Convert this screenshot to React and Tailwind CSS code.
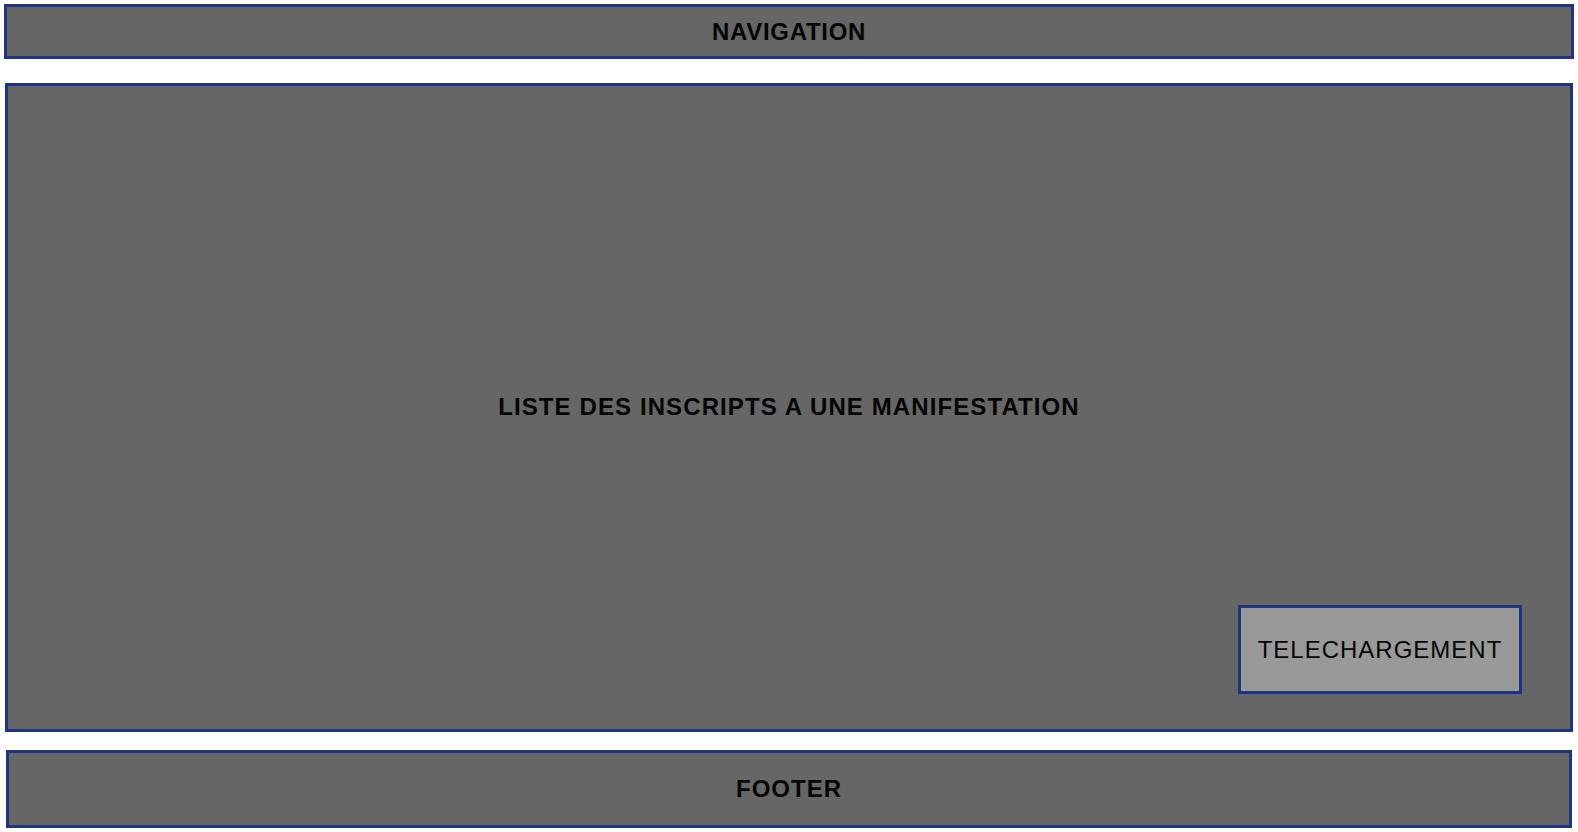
const App = () => {
  return (
    <div className="w-[1578px] h-[832px] bg-white flex flex-col font-['Liberation_Sans',Arial,sans-serif] text-[#050505]">
      <header className="mt-[4px] mx-[4px] h-[55px] border-[3px] border-[#1f3483] bg-[#666666] flex items-center justify-center">
        <span className="text-[24px] leading-none font-bold tracking-[0.7px]">NAVIGATION</span>
      </header>

      <main className="mt-[24px] mx-[5px] h-[649px] border-[3px] border-[#1f3483] bg-[#666666] grid">
        <div className="col-start-1 row-start-1 flex items-center justify-center">
          <h1 className="text-[24px] leading-none font-bold tracking-[1.1px] -translate-y-px">
            LISTE DES INSCRIPTS A UNE MANIFESTATION
          </h1>
        </div>
        <div className="col-start-1 row-start-1 flex items-end justify-end pr-[48px] pb-[35px]">
          <button className="w-[284px] h-[89px] border-[3px] border-[#1f3483] bg-[#999999] text-[24px] leading-none tracking-[1px]">
            TELECHARGEMENT
          </button>
        </div>
      </main>

      <footer className="mt-[18px] mx-[6px] h-[78px] border-[3px] border-[#1f3483] bg-[#666666] flex items-center justify-center">
        <span className="text-[24px] leading-none font-bold tracking-[1px]">FOOTER</span>
      </footer>
    </div>
  );
};

export default App;
